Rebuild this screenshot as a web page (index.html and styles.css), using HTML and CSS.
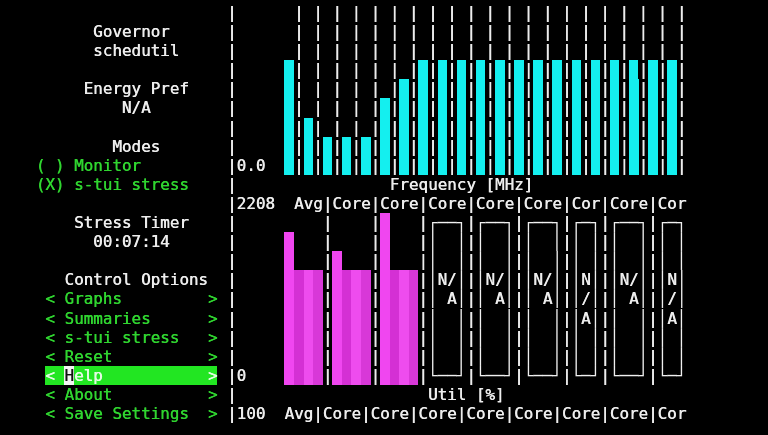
FILE: index.html
```html
<!DOCTYPE html>
<html>
<head>
<meta charset="utf-8">
<title>s-tui</title>
<link rel="stylesheet" href="styles.css">
</head>
<body>
<div class="screen">
  <div class="side">
    <div class="ln"></div>
    <div class="ln">         Governor</div>
    <div class="ln">         schedutil</div>
    <div class="ln"></div>
    <div class="ln">        Energy Pref</div>
    <div class="ln">            N/A</div>
    <div class="ln"></div>
    <div class="ln">           Modes</div>
    <div class="ln radio">( ) Monitor</div>
    <div class="ln radio">(X) s-tui stress</div>
    <div class="ln"></div>
    <div class="ln">       Stress Timer</div>
    <div class="ln">         00:07:14</div>
    <div class="ln"></div>
    <div class="ln">      Control Options</div>
    <div class="btn"><span>&lt; Graphs</span><span>&gt;</span></div>
    <div class="btn"><span>&lt; Summaries</span><span>&gt;</span></div>
    <div class="btn"><span>&lt; s-tui stress</span><span>&gt;</span></div>
    <div class="btn"><span>&lt; Reset</span><span>&gt;</span></div>
    <div class="btn focus"><span>&lt; <span class="cur">H</span>elp</span><span>&gt;</span></div>
    <div class="btn"><span>&lt; About</span><span>&gt;</span></div>
    <div class="btn"><span>&lt; Save Settings</span><span>&gt;</span></div>
  </div>
  <div class="main">
    <div class="ln">|      | | | | | | | | | | | | | | | | | | | | |</div>
    <div class="ln">|      | | | | | | | | | | | | | | | | | | | | |</div>
    <div class="ln">|      | | | | | | | | | | | | | | | | | | | | |</div>
    <div class="ln">|     <i class="q"></i>| | | | | | |<i class="q"></i>|<i class="q"></i>|<i class="q"></i>|<i class="q"></i>|<i class="q"></i>|<i class="q"></i>|<i class="q"></i>|<i class="q"></i>|<i class="q"></i>|<i class="q"></i>|<i class="q"></i>|<i class="q"></i>|<i class="q"></i>|<i class="q"></i>|</div>
    <div class="ln">|     <i class="q"></i>| | | | | |<i class="q"></i>|<i class="q"></i>|<i class="q"></i>|<i class="q"></i>|<i class="q"></i>|<i class="q"></i>|<i class="q"></i>|<i class="q"></i>|<i class="q"></i>|<i class="q"></i>|<i class="q"></i>|<i class="q"></i>|<i class="q"></i>|<i class="q"></i>|<i class="q"></i>|</div>
    <div class="ln">|     <i class="q"></i>| | | | |<i class="q"></i>|<i class="q"></i>|<i class="q"></i>|<i class="q"></i>|<i class="q"></i>|<i class="q"></i>|<i class="q"></i>|<i class="q"></i>|<i class="q"></i>|<i class="q"></i>|<i class="q"></i>|<i class="q"></i>|<i class="q"></i>|<i class="q"></i>|<i class="q"></i>|<i class="q"></i>|</div>
    <div class="ln">|     <i class="q"></i>|<i class="q"></i>| | | |<i class="q"></i>|<i class="q"></i>|<i class="q"></i>|<i class="q"></i>|<i class="q"></i>|<i class="q"></i>|<i class="q"></i>|<i class="q"></i>|<i class="q"></i>|<i class="q"></i>|<i class="q"></i>|<i class="q"></i>|<i class="q"></i>|<i class="q"></i>|<i class="q"></i>|<i class="q"></i>|</div>
    <div class="ln">|     <i class="q"></i>|<i class="q"></i>|<i class="q"></i>|<i class="q"></i>|<i class="q"></i>|<i class="q"></i>|<i class="q"></i>|<i class="q"></i>|<i class="q"></i>|<i class="q"></i>|<i class="q"></i>|<i class="q"></i>|<i class="q"></i>|<i class="q"></i>|<i class="q"></i>|<i class="q"></i>|<i class="q"></i>|<i class="q"></i>|<i class="q"></i>|<i class="q"></i>|<i class="q"></i>|</div>
    <div class="ln">|0.0  <i class="q"></i>|<i class="q"></i>|<i class="q"></i>|<i class="q"></i>|<i class="q"></i>|<i class="q"></i>|<i class="q"></i>|<i class="q"></i>|<i class="q"></i>|<i class="q"></i>|<i class="q"></i>|<i class="q"></i>|<i class="q"></i>|<i class="q"></i>|<i class="q"></i>|<i class="q"></i>|<i class="q"></i>|<i class="q"></i>|<i class="q"></i>|<i class="q"></i>|<i class="q"></i>|</div>
    <div class="ln">|                Frequency [MHz]</div>
    <div class="ln">|2208  Avg|Core|Core|Core|Core|Core|Cor|Core|Cor</div>
    <div class="ln">|         |    |<i class="m1"></i>   |<span class="box">┌──┐</span>|<span class="box">┌──┐</span>|<span class="box">┌──┐</span>|<span class="box">┌─┐</span>|<span class="box">┌──┐</span>|<span class="box">┌─┐</span></div>
    <div class="ln">|     <i class="m1"></i>   |    |<i class="m1"></i>   |<span class="box">│  │</span>|<span class="box">│  │</span>|<span class="box">│  │</span>|<span class="box">│ │</span>|<span class="box">│  │</span>|<span class="box">│ │</span></div>
    <div class="ln">|     <i class="m1"></i>   |<i class="m1"></i>   |<i class="m1"></i>   |<span class="box">│  │</span>|<span class="box">│  │</span>|<span class="box">│  │</span>|<span class="box">│ │</span>|<span class="box">│  │</span>|<span class="box">│ │</span></div>
    <div class="ln">|     <i class="m1"></i><i class="m2"></i><i class="m3"></i><i class="m4"></i>|<i class="m1"></i><i class="m2"></i><i class="m3"></i><i class="m4"></i>|<i class="m1"></i><i class="m2"></i><i class="m3"></i><i class="m4"></i>|<span class="box">│</span>N/<span class="box">│</span>|<span class="box">│</span>N/<span class="box">│</span>|<span class="box">│</span>N/<span class="box">│</span>|<span class="box">│</span>N<span class="box">│</span>|<span class="box">│</span>N/<span class="box">│</span>|<span class="box">│</span>N<span class="box">│</span></div>
    <div class="ln">|     <i class="m1"></i><i class="m2"></i><i class="m3"></i><i class="m4"></i>|<i class="m1"></i><i class="m2"></i><i class="m3"></i><i class="m4"></i>|<i class="m1"></i><i class="m2"></i><i class="m3"></i><i class="m4"></i>|<span class="box">│</span> A<span class="box">│</span>|<span class="box">│</span> A<span class="box">│</span>|<span class="box">│</span> A<span class="box">│</span>|<span class="box">│</span>/<span class="box">│</span>|<span class="box">│</span> A<span class="box">│</span>|<span class="box">│</span>/<span class="box">│</span></div>
    <div class="ln">|     <i class="m1"></i><i class="m2"></i><i class="m3"></i><i class="m4"></i>|<i class="m1"></i><i class="m2"></i><i class="m3"></i><i class="m4"></i>|<i class="m1"></i><i class="m2"></i><i class="m3"></i><i class="m4"></i>|<span class="box">│  │</span>|<span class="box">│  │</span>|<span class="box">│  │</span>|<span class="box">│</span>A<span class="box">│</span>|<span class="box">│  │</span>|<span class="box">│</span>A<span class="box">│</span></div>
    <div class="ln">|     <i class="m1"></i><i class="m2"></i><i class="m3"></i><i class="m4"></i>|<i class="m1"></i><i class="m2"></i><i class="m3"></i><i class="m4"></i>|<i class="m1"></i><i class="m2"></i><i class="m3"></i><i class="m4"></i>|<span class="box">│  │</span>|<span class="box">│  │</span>|<span class="box">│  │</span>|<span class="box">│ │</span>|<span class="box">│  │</span>|<span class="box">│ │</span></div>
    <div class="ln">|     <i class="m1"></i><i class="m2"></i><i class="m3"></i><i class="m4"></i>|<i class="m1"></i><i class="m2"></i><i class="m3"></i><i class="m4"></i>|<i class="m1"></i><i class="m2"></i><i class="m3"></i><i class="m4"></i>|<span class="box">│  │</span>|<span class="box">│  │</span>|<span class="box">│  │</span>|<span class="box">│ │</span>|<span class="box">│  │</span>|<span class="box">│ │</span></div>
    <div class="ln">|0    <i class="m1"></i><i class="m2"></i><i class="m3"></i><i class="m4"></i>|<i class="m1"></i><i class="m2"></i><i class="m3"></i><i class="m4"></i>|<i class="m1"></i><i class="m2"></i><i class="m3"></i><i class="m4"></i>|<span class="box">└──┘</span>|<span class="box">└──┘</span>|<span class="box">└──┘</span>|<span class="box">└─┘</span>|<span class="box">└──┘</span>|<span class="box">└─┘</span></div>
    <div class="ln">|                    Util [%]</div>
    <div class="ln">|100  Avg|Core|Core|Core|Core|Core|Core|Core|Cor</div>
  </div>
</div>
</body>
</html>
```
FILE: styles.css
```css
html, body {
  margin: 0;
  padding: 0;
  background: #000;
}

body {
  font-family: "DejaVu Sans Mono", "Liberation Mono", monospace;
  font-size: 15.9px;
  line-height: 19.1px;
  color: #ededed;
  -webkit-font-smoothing: antialiased;
  text-shadow: 0.45px 0 0 currentColor;
}

.screen {
  display: flex;
  height: 435px;
  padding: 3px 0 0 7px;
  box-sizing: border-box;
  overflow: hidden;
  will-change: transform;
}

.side {
  width: 23ch;
  flex: none;
}

.main {
  flex: 1;
  min-width: 0;
}

.ln {
  height: 19.1px;
  white-space: pre;
}

.radio {
  padding-left: 3ch;
  color: #30d530;
}

.btn {
  display: flex;
  justify-content: space-between;
  width: 18ch;
  height: 19.1px;
  margin-left: 4ch;
  white-space: pre;
  color: #30d530;
}

.btn.focus {
  background: #22e622;
  color: #e4fbe4;
}

.cur {
  background: #f4f4f4;
  color: #111;
}

.box {
  color: #f0f0f0;
  text-shadow: none;
}

.q, .m1, .m2, .m3, .m4 {
  display: inline-block;
  width: 1ch;
  height: 19.1px;
  vertical-align: top;
  font-style: normal;
}

.q { background: #14efef; }
.m1 { background: #f046f0; }
.m2 { background: #d430d4; }
.m3 { background: #ee4cee; }
.m4 { background: #d838d8; }
```
